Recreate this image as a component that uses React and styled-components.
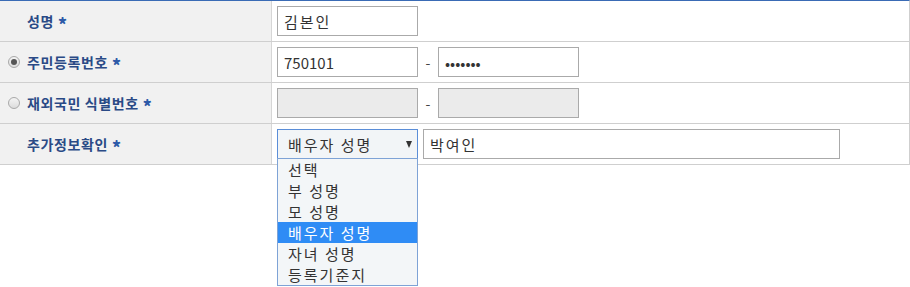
import React from 'react';
import styled, { createGlobalStyle } from 'styled-components';

const GlobalStyle = createGlobalStyle`
    body {
        margin: 0;
        background: #fff;
        font-family: "Noto Sans CJK KR", "Noto Sans", sans-serif;
    }
`;

const Page = styled.div`
    width: 910px;
    height: 287px;
`;

const FormTable = styled.div`
    width: 910px;
    box-sizing: border-box;
    border-top: 1px solid #3a6bb5;
    border-right: 1px solid #cfcfcf;
`;

const Row = styled.div`
    display: grid;
    grid-template-columns: 272px 1fr;
    height: 41px;
    box-sizing: border-box;
    border-bottom: 1px solid #cfcfcf;
`;

const LabelCell = styled.div`
    display: flex;
    align-items: center;
    padding-left: 8px;
    background: #f1f1f1;
    border-right: 1px solid #d6d6d6;
    font-size: 14px;
    font-weight: 700;
    letter-spacing: 0.6px;
    color: #2a4a86;
    white-space: nowrap;
`;

const RadioSlot = styled.span`
    width: 12px;
    height: 12px;
    margin-right: 7px;
    flex: none;
    display: flex;
    align-items: center;
    justify-content: center;
`;

const Radio = styled.span`
    width: 12px;
    height: 12px;
    box-sizing: border-box;
    border-radius: 50%;
    border: 1px solid #a9a9a9;
    background: linear-gradient(#f4f4f4, #dcdcdc);
    display: flex;
    align-items: center;
    justify-content: center;

    &::after {
        content: '';
        width: 6px;
        height: 6px;
        border-radius: 50%;
        background: #555;
        display: ${(p) => (p.$checked ? 'block' : 'none')};
    }
`;

const Star = styled.span`
    margin-left: 4px;
    margin-top: 5px;
    color: #2d5aa8;
    font-size: 17px;
    font-weight: 900;
    line-height: 1;
`;

const FieldCell = styled.div`
    display: flex;
    align-items: center;
    padding-left: 5px;
`;

const TextInput = styled.input`
    width: ${(p) => p.$width || 141}px;
    height: 30px;
    box-sizing: border-box;
    margin: 0;
    padding: 0 6px;
    border: 1px solid #aaa;
    border-radius: 0;
    background: ${(p) => (p.disabled ? '#ebebeb' : '#fff')};
    font-family: inherit;
    font-size: 15px;
    letter-spacing: ${(p) => (p.$latin ? '0' : '2px')};
    color: #333;
    outline: none;
`;

const Dash = styled.span`
    width: 20px;
    text-align: center;
    font-size: 14px;
    color: #444;
`;

const SelectWrap = styled.div`
    position: relative;
    margin-right: 5px;
`;

const SelectBox = styled.div`
    width: 141px;
    height: 30px;
    box-sizing: border-box;
    border: 1px solid #5b8ed8;
    background: #f2f5f7;
    display: flex;
    align-items: center;
    justify-content: space-between;
    padding: 0 5px 0 10px;
    font-size: 15px;
    letter-spacing: 2px;
    color: #333;
`;

const Caret = styled.span`
    width: 0;
    height: 0;
    border-left: 3.5px solid transparent;
    border-right: 3.5px solid transparent;
    border-top: 7px solid #333;
`;

const OptionList = styled.ul`
    position: absolute;
    top: 29px;
    left: 0;
    width: 141px;
    box-sizing: border-box;
    margin: 0;
    padding: 0;
    list-style: none;
    border: 1px solid #7ea3d6;
    background: #f3f6f8;
    z-index: 2;
`;

const Option = styled.li`
    height: 21px;
    line-height: 21px;
    padding-left: 10px;
    font-size: 15px;
    letter-spacing: 2px;
    color: ${(p) => (p.$active ? '#fff' : '#333')};
    background: ${(p) => (p.$active ? '#2f8cf5' : 'transparent')};
    white-space: nowrap;
`;

const options = ['선택', '부 성명', '모 성명', '배우자 성명', '자녀 성명', '등록기준지'];

const Label = ({ radio, checked, children }) => (
    <LabelCell>
        <RadioSlot>{radio && <Radio $checked={checked} />}</RadioSlot>
        {children}
        <Star>*</Star>
    </LabelCell>
);

const App = () => {
    const selected = '배우자 성명';

    return (
        <Page>
            <GlobalStyle />
            <FormTable>
                <Row>
                    <Label>성명</Label>
                    <FieldCell>
                        <TextInput defaultValue='김본인' readOnly />
                    </FieldCell>
                </Row>
                <Row>
                    <Label radio checked>주민등록번호</Label>
                    <FieldCell>
                        <TextInput $latin defaultValue='750101' readOnly />
                        <Dash>-</Dash>
                        <TextInput $latin type='password' defaultValue='1234567' readOnly />
                    </FieldCell>
                </Row>
                <Row>
                    <Label radio>재외국민 식별번호</Label>
                    <FieldCell>
                        <TextInput disabled />
                        <Dash>-</Dash>
                        <TextInput disabled />
                    </FieldCell>
                </Row>
                <Row>
                    <Label>추가정보확인</Label>
                    <FieldCell>
                        <SelectWrap>
                            <SelectBox>
                                {selected}
                                <Caret />
                            </SelectBox>
                            <OptionList>
                                {options.map((opt) => (
                                    <Option key={opt} $active={opt === selected}>
                                        {opt}
                                    </Option>
                                ))}
                            </OptionList>
                        </SelectWrap>
                        <TextInput $width={417} defaultValue='박여인' readOnly />
                    </FieldCell>
                </Row>
            </FormTable>
        </Page>
    );
};

export default App;
